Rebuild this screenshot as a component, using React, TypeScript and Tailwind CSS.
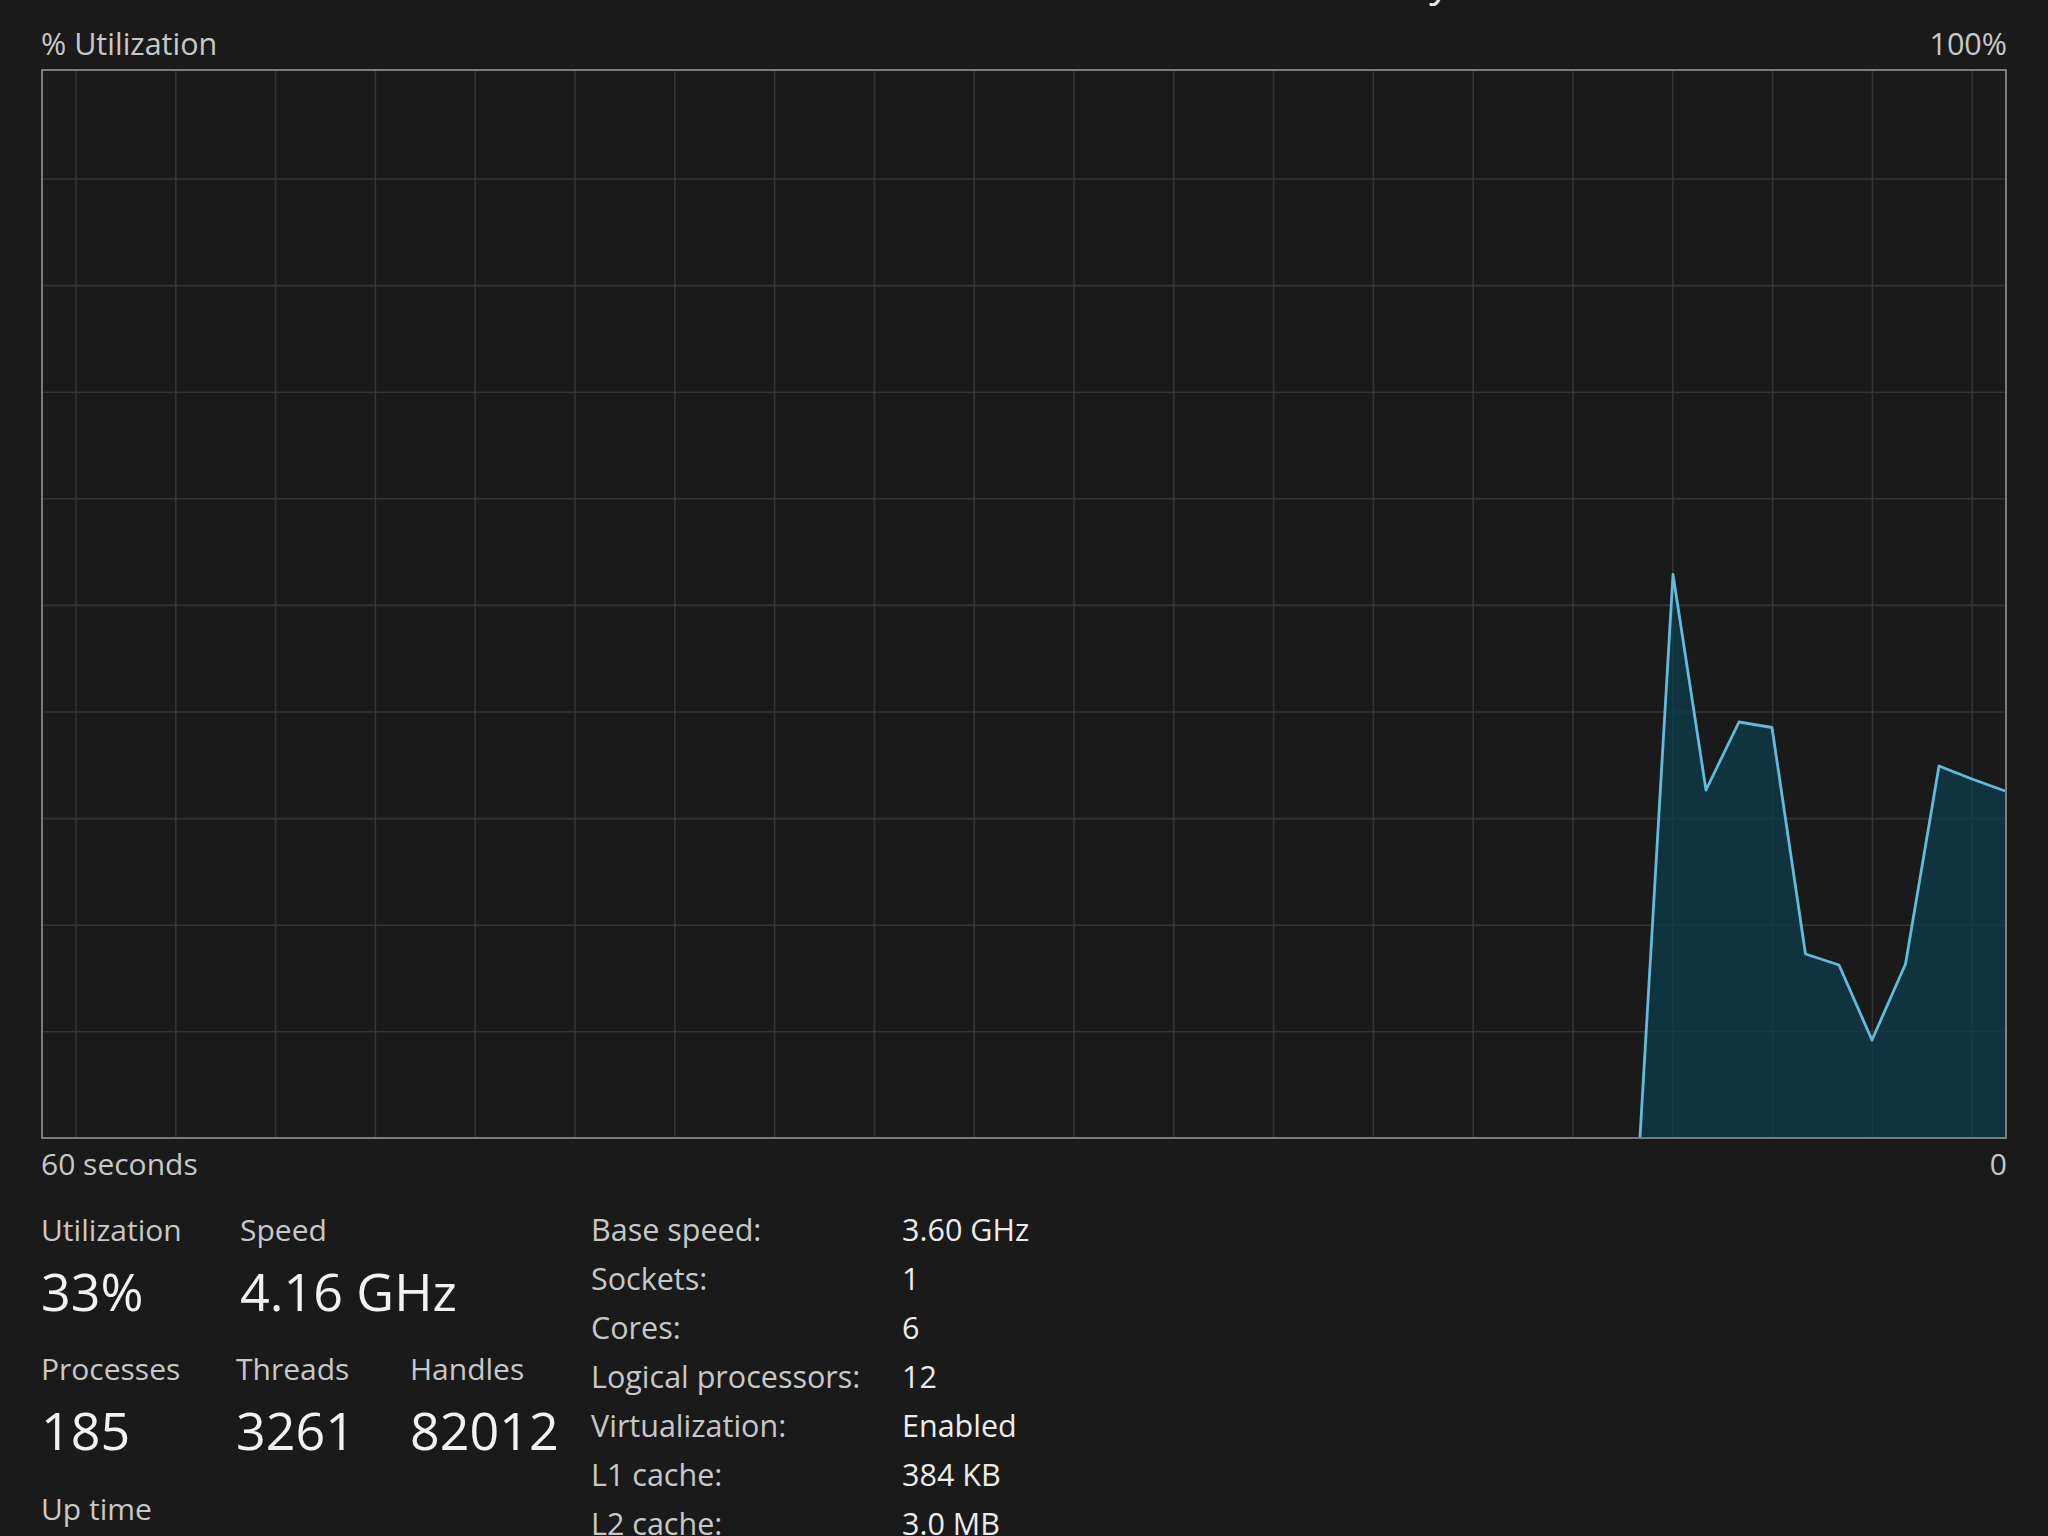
import React from 'react';

// CPU utilisation samples, in px inside the graph box (x, y)
const samples: [number, number][] = [
  [1597, 1066],
  [1630, 503.5],
  [1663, 719],
  [1696, 651],
  [1729, 656.5],
  [1762.5, 883],
  [1796, 894],
  [1829, 969],
  [1862.5, 893],
  [1896, 695],
  [1929, 708],
  [1962, 720],
];

const vLines = Array.from({ length: 20 }, (_, i) => 33 + i * 99.8);
const hLines = Array.from({ length: 9 }, (_, j) => 108 + j * 106.6);

const specs = [
  ['Base speed:', '3.60 GHz'],
  ['Sockets:', '1'],
  ['Cores:', '6'],
  ['Logical processors:', '12'],
  ['Virtualization:', 'Enabled'],
  ['L1 cache:', '384 KB'],
  ['L2 cache:', '3.0 MB'],
  ['L3 cache:', '32.0 MB'],
];

const UtilGraph = () => {
  const line = samples.map(([x, y]) => `${x},${y}`).join(' ');
  return (
    <div className="w-[1966px] h-[1070px] border-2 border-[#7c7c7c]">
      <svg width="1962" height="1066" className="block">
        {vLines.map((x) => (
          <line key={`v${x}`} x1={x} x2={x} y1={0} y2={1066} stroke="#333333" strokeWidth={1.6} />
        ))}
        {hLines.map((y) => (
          <line key={`h${y}`} x1={0} x2={1962} y1={y} y2={y} stroke="#333333" strokeWidth={1.6} />
        ))}
        <polygon points={`${line} 1962,1066`} fill="rgb(12,62,78)" fillOpacity={0.72} />
        <polyline
          points={line}
          fill="none"
          stroke="#62bbdd"
          strokeWidth={2.8}
          strokeLinejoin="round"
        />
      </svg>
    </div>
  );
};

const Stat = ({ label, value, width }: { label: string; value: string; width?: string }) => (
  <div className={width}>
    <div className="text-[30px] leading-[40px] text-[#c8c8c8]">{label}</div>
    <div className="text-[52px] leading-[82px] text-[#f2f2f2]">{value}</div>
  </div>
);

export default function App() {
  return (
    <div className="w-[2048px] h-[1536px] overflow-hidden bg-[#1a1a1a] flex flex-col px-[41px] font-['Open_Sans','Noto_Sans',sans-serif]">
      {/* processor name, cut off by the top edge */}
      <div className="-mt-[50px] h-[60px] text-right text-[42px] leading-[60px] text-[#e6e6e6] whitespace-nowrap">
        AMD Ryzen 5 3600 6-Core Processor
      </div>

      <div className="mt-[15px] flex justify-between text-[30.5px] leading-[36px] text-[#c8c8c8]">
        <span>% Utilization</span>
        <span>100%</span>
      </div>

      <div className="mt-[8px]">
        <UtilGraph />
      </div>

      <div className="mt-[5px] flex justify-between text-[30px] leading-[40px] text-[#c8c8c8]">
        <span>60 seconds</span>
        <span>0</span>
      </div>

      <div className="mt-[21px] flex">
        <div className="w-[550px] pt-[5px]">
          <div className="flex">
            <Stat label="Utilization" value="33%" width="w-[199px]" />
            <Stat label="Speed" value="4.16 GHz" />
          </div>
          <div className="mt-[17px] flex">
            <Stat label="Processes" value="185" width="w-[195px]" />
            <Stat label="Threads" value="3261" width="w-[174px]" />
            <Stat label="Handles" value="82012" />
          </div>
          <div className="mt-[18px]">
            <Stat label="Up time" value="0:01:12:45" />
          </div>
        </div>

        <div className="flex flex-col text-[30.5px] leading-[49px]">
          {specs.map(([k, v]) => (
            <div key={k} className="flex">
              <span className="w-[311px] text-[#c8c8c8]">{k}</span>
              <span className="text-[#ececec]">{v}</span>
            </div>
          ))}
        </div>
      </div>
    </div>
  );
}
